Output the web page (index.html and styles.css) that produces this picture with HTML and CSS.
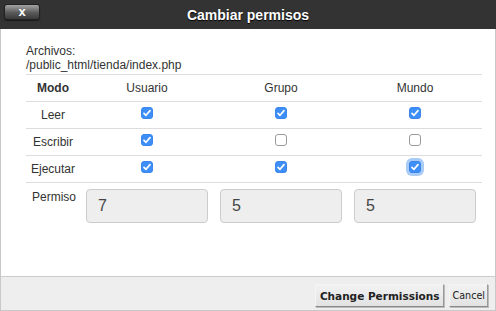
FILE: index.html
```html
<!DOCTYPE html>
<html lang="es">
<head>
<meta charset="utf-8">
<title>Cambiar permisos</title>
<link rel="stylesheet" href="styles.css">
</head>
<body>
<div class="dialog">
  <div class="titlebar">
    <button class="close" type="button" aria-label="Cerrar">x</button>
    <div class="title">Cambiar permisos</div>
  </div>
  <div class="content">
    <div class="info">
      <div>Archivos:</div>
      <div>/public_html/tienda/index.php</div>
    </div>
    <table class="perms">
      <colgroup>
        <col class="c-mode"><col class="c-col"><col class="c-col"><col class="c-col">
      </colgroup>
      <thead>
        <tr><th class="mode">Modo</th><th>Usuario</th><th>Grupo</th><th>Mundo</th></tr>
      </thead>
      <tbody>
        <tr>
          <td>Leer</td>
          <td><input type="checkbox" class="cb" checked></td>
          <td><input type="checkbox" class="cb" checked></td>
          <td><input type="checkbox" class="cb" checked></td>
        </tr>
        <tr>
          <td>Escribir</td>
          <td><input type="checkbox" class="cb" checked></td>
          <td><input type="checkbox" class="cb"></td>
          <td><input type="checkbox" class="cb"></td>
        </tr>
        <tr>
          <td>Ejecutar</td>
          <td><input type="checkbox" class="cb" checked></td>
          <td><input type="checkbox" class="cb" checked></td>
          <td><input type="checkbox" class="cb cb-focus" checked></td>
        </tr>
        <tr class="perm-row">
          <td class="perm-label">Permiso</td>
          <td class="perm-cell"><input class="perm-input" type="text" value="7" readonly></td>
          <td class="perm-cell"><input class="perm-input" type="text" value="5" readonly></td>
          <td class="perm-cell"><input class="perm-input" type="text" value="5" readonly></td>
        </tr>
      </tbody>
    </table>
  </div>
  <div class="footer">
    <button class="btn btn-primary" type="button">Change Permissions</button>
    <button class="btn btn-cancel" type="button">Cancel</button>
  </div>
</div>
</body>
</html>
```

FILE: styles.css
```css
html, body {
  margin: 0;
  padding: 0;
  background: #fff;
}

.dialog {
  width: 496px;
  height: 311px;
  box-sizing: border-box;
  display: flex;
  flex-direction: column;
  border-left: 1px solid #c8c8c8;
  border-right: 1px solid #c8c8c8;
  border-bottom: 1px solid #c8c8c8;
  font-family: "Liberation Sans", Arial, sans-serif;
  font-size: 12px;
  color: #333;
  background: #fff;
}

.titlebar {
  position: relative;
  height: 29px;
  margin: 0 -1px;
  background: #333;
  display: flex;
  align-items: center;
  justify-content: center;
}

.title {
  color: #fff;
  font-weight: bold;
  font-size: 14px;
  text-shadow: 0 1px 1px #000;
}

.close {
  position: absolute;
  left: 4px;
  top: 4px;
  width: 36px;
  height: 16px;
  padding: 0;
  border: 1px solid #222;
  border-radius: 3px;
  background: linear-gradient(#a4a4a4, #5a5a5a 55%, #3a3a3a);
  color: #fff;
  font-family: "Liberation Sans", Arial, sans-serif;
  font-weight: bold;
  font-size: 13px;
  line-height: 12px;
  text-align: center;
  box-shadow: 0 1px 1px rgba(0,0,0,0.5);
}

.content {
  flex: 1;
  padding: 15px 13px 0 25px;
}

.info {
  line-height: 14px;
  margin-bottom: 2px;
}

.perms {
  width: 456px;
  table-layout: fixed;
  border-collapse: collapse;
  border-top: 1px solid #ddd;
}

.c-mode { width: 54px; }
.c-col { width: 134px; }

.perms th,
.perms td {
  height: 26px;
  padding: 0;
  text-align: center;
  vertical-align: middle;
  font-weight: normal;
}

.perms th.mode { font-weight: bold; }

.perms thead tr,
.perms tbody tr {
  border-bottom: 1px solid #ddd;
}

.perms tbody tr.perm-row { border-bottom: none; }

.cb {
  -webkit-appearance: none;
  appearance: none;
  display: inline-block;
  width: 12px;
  height: 12px;
  margin: 0 0 4px;
  vertical-align: middle;
  box-sizing: border-box;
  border: 1px solid #9a9a9a;
  border-radius: 3px;
  background: #fff;
}

.cb:checked {
  border-color: #3a86ee;
  background-color: #3d8ef7;
  background-image: url("data:image/svg+xml;utf8,<svg xmlns='http://www.w3.org/2000/svg' viewBox='0 0 12 12'><path d='M3 6.3 L5 8.3 L9 3.6' fill='none' stroke='white' stroke-width='1.7' stroke-linecap='round' stroke-linejoin='round'/></svg>");
  background-size: 12px 12px;
  background-position: center;
  background-repeat: no-repeat;
}

.cb-focus {
  box-shadow: 0 0 0 3px #a9cbf7;
}

.perm-row td {
  height: auto;
  padding-top: 6px;
  vertical-align: top;
}

.perms td.perm-label {
  text-align: left;
  padding-left: 6px;
  padding-top: 7px;
  line-height: 14px;
}

.perms td.perm-cell {
  padding-left: 6px;
  padding-right: 6px;
}

.perm-input {
  display: block;
  width: 100%;
  height: 34px;
  box-sizing: border-box;
  margin: 0;
  padding: 0 11px;
  border: 1px solid #ccc;
  border-radius: 4px;
  background: #eee;
  color: #444;
  font-family: "Liberation Sans", Arial, sans-serif;
  font-size: 16px;
}

.footer {
  border-top: 1px solid #ccc;
  background: #eee;
  display: flex;
  justify-content: flex-end;
  align-items: flex-start;
  gap: 5px;
  padding: 7px 7px 0 0;
  box-sizing: border-box;
  height: 34px;
}

.btn {
  height: 23px;
  padding: 0 3px;
  margin: 0;
  border: 1px solid;
  border-color: #f4f4f4 #9a9a9a #8a8a8a #f4f4f4;
  border-radius: 0;
  background: linear-gradient(#f2f2f2, #e2e2e2);
  color: #222;
  font-family: "DejaVu Sans", Verdana, sans-serif;
  font-size: 10px;
  box-shadow: 1px 1px 0 #bbb;
}

.btn-primary {
  font-weight: bold;
  font-size: 10.5px;
  padding: 0 4px;
}

.btn-cancel {
  padding: 0 2px;
  font-size: 9.6px;
}
```
